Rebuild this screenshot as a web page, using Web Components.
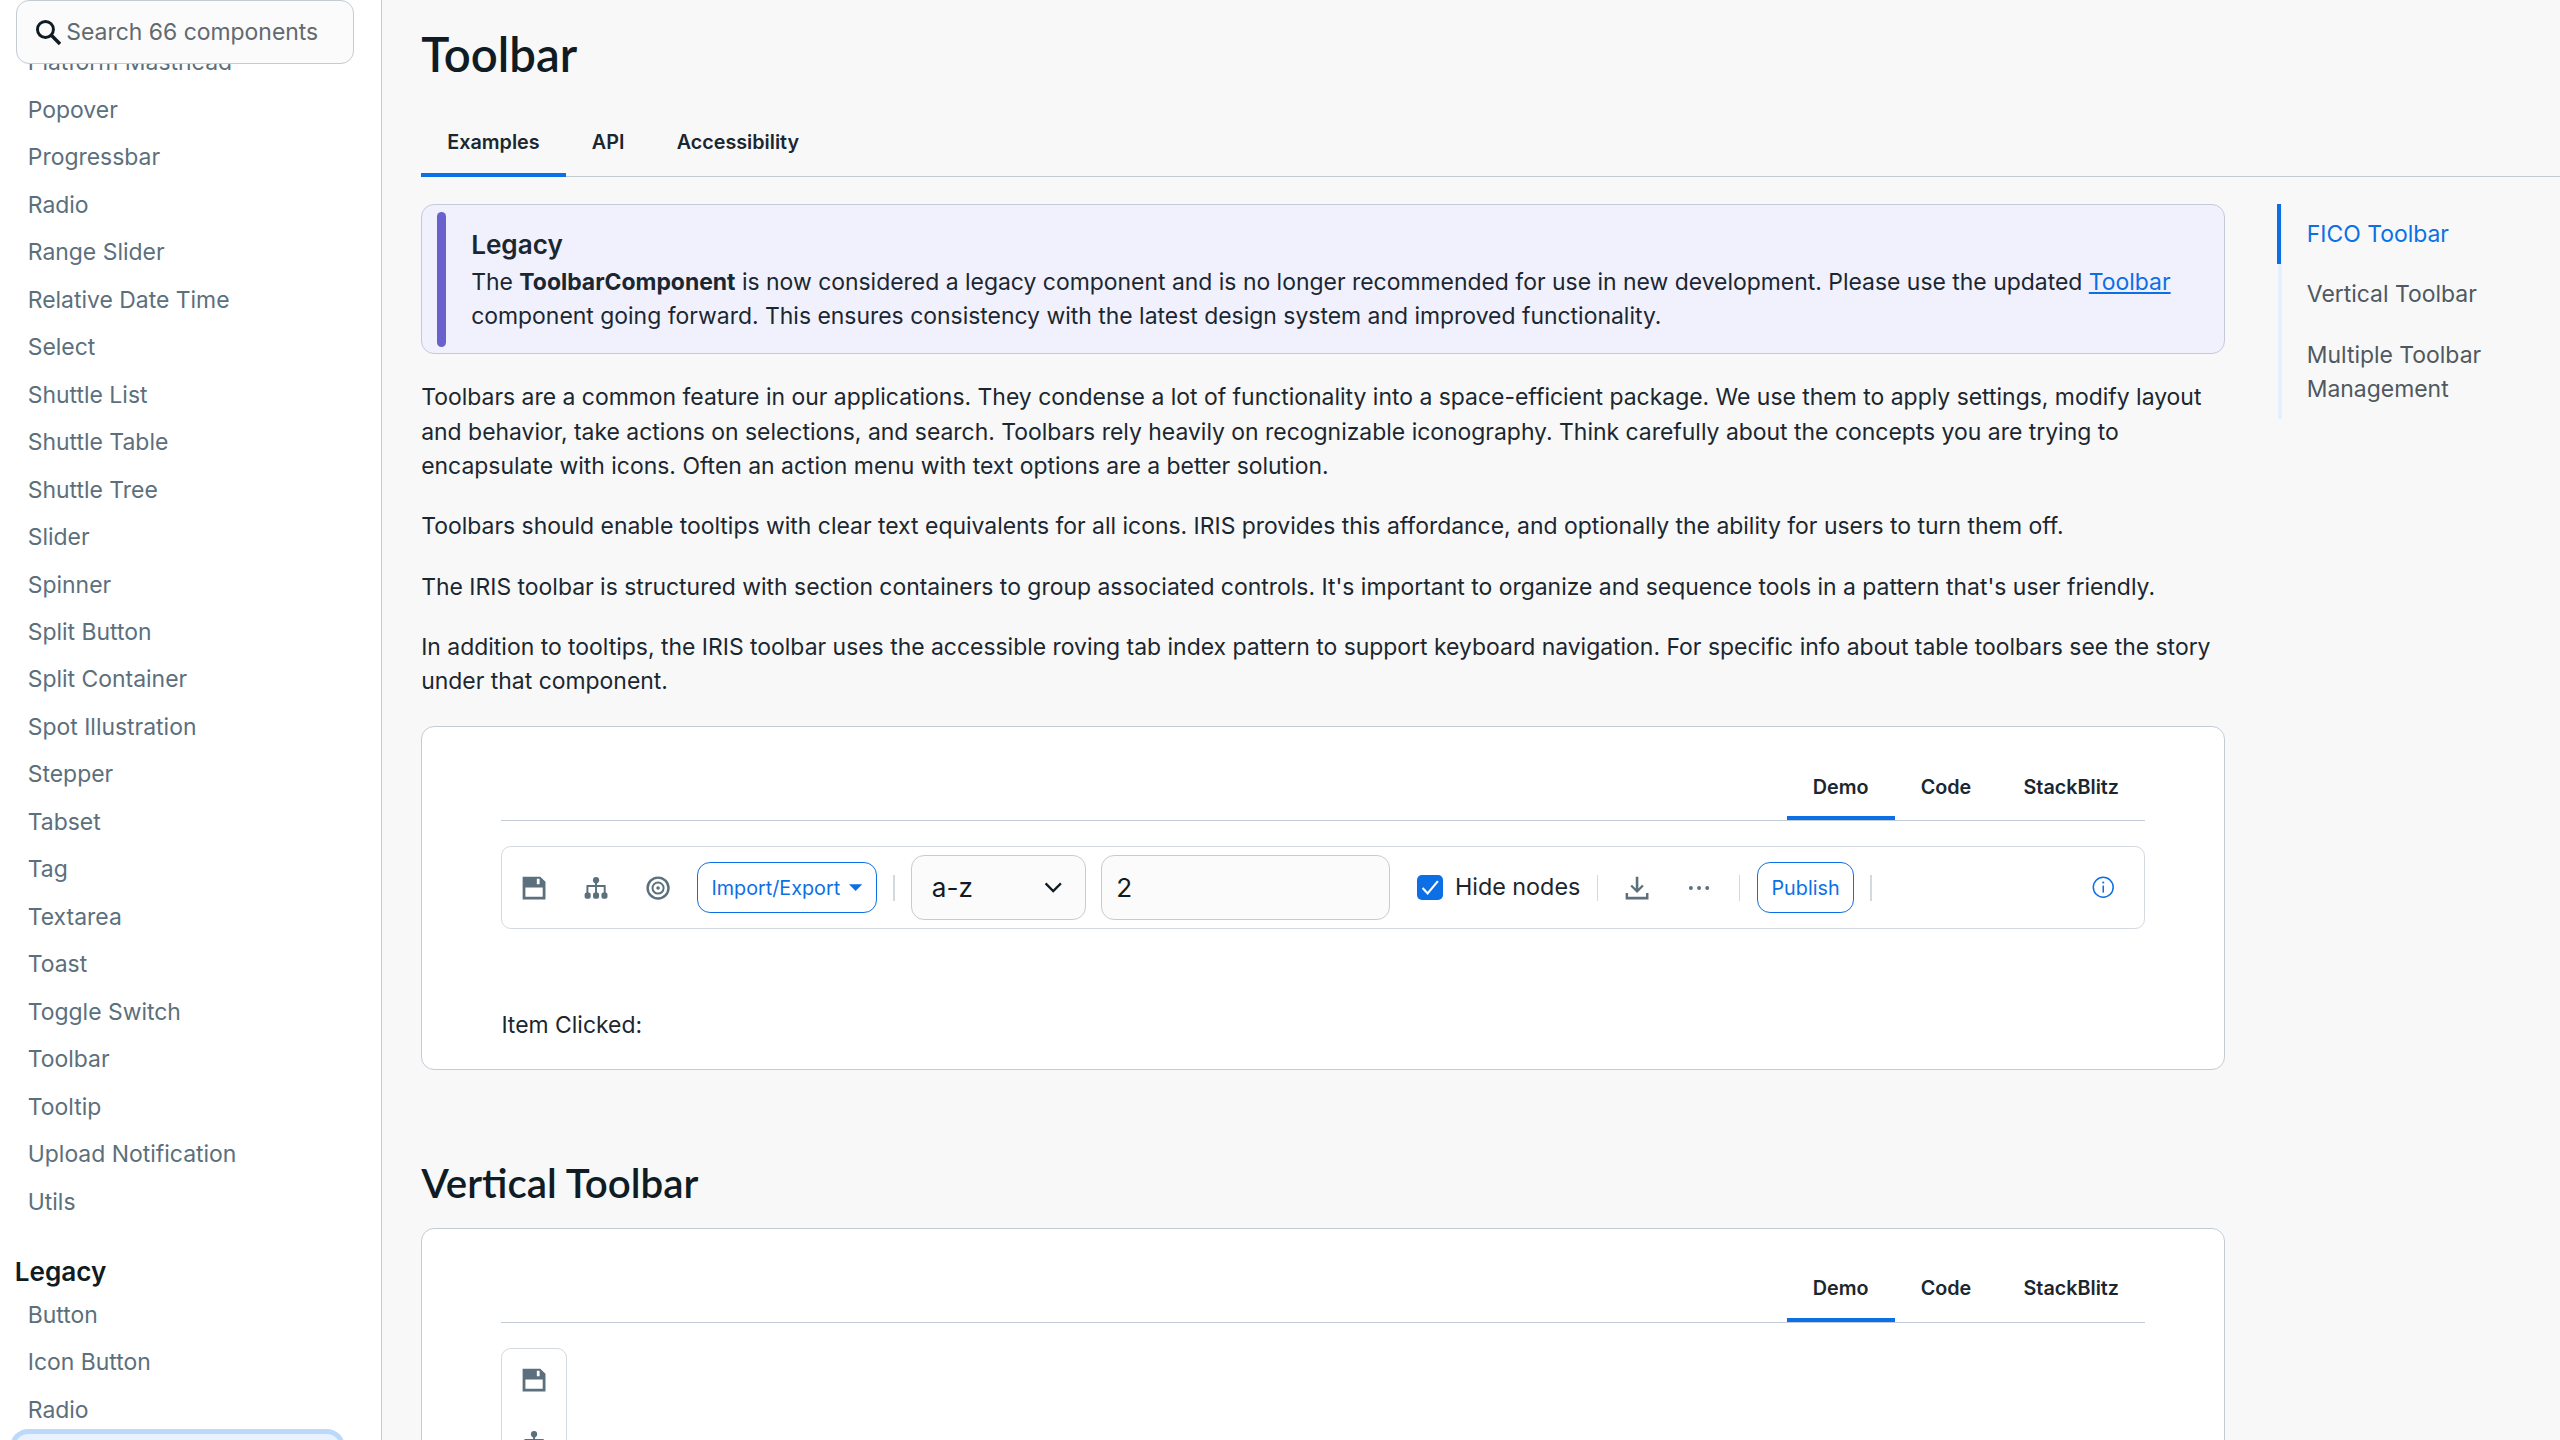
<!DOCTYPE html>
<html lang="en">
<head>
<meta charset="utf-8">
<title>Toolbar</title>
<style>
  /* the whole page is measured on a 1568 wide grid, the window is 2560 */
  html { zoom: 1.63265; overflow: hidden; }
  body { margin: 0; width: 1568px; height: 882px; overflow: hidden; font-family: Inter, "Liberation Sans", sans-serif; }
</style>
</head>
<body>
<app-shell>
  <side-nav slot="side"></side-nav>
  <doc-page slot="main" heading="Toolbar">
    <page-tabs items="Examples,API,Accessibility"></page-tabs>
    <legacy-alert>
      The <b>ToolbarComponent</b> is now considered a legacy component and is no longer recommended for use in new development. Please use the updated <a href="#">Toolbar</a> component going forward. This ensures consistency with the latest design system and improved functionality.
    </legacy-alert>
    <p>Toolbars are a common feature in our applications. They condense a lot of functionality into a space-efficient package. We use them to apply settings, modify layout and behavior, take actions on selections, and search. Toolbars rely heavily on recognizable iconography. Think carefully about the concepts you are trying to encapsulate with icons. Often an action menu with text options are a better solution.</p>
    <p>Toolbars should enable tooltips with clear text equivalents for all icons. IRIS provides this affordance, and optionally the ability for users to turn them off.</p>
    <p>The IRIS toolbar is structured with section containers to group associated controls. It's important to organize and sequence tools in a pattern that's user friendly.</p>
    <p>In addition to tooltips, the IRIS toolbar uses the accessible roving tab index pattern to support keyboard navigation. For specific info about table toolbars see the story under that component.</p>
    <demo-card>
      <horizontal-toolbar></horizontal-toolbar>
      <div style="margin-top:48.5px;font-size:14.05px;line-height:21px;color:#1b2730">Item Clicked:</div>
    </demo-card>
    <section-title>Vertical Toolbar</section-title>
    <demo-card>
      <vertical-toolbar></vertical-toolbar>
    </demo-card>
    <toc-nav slot="toc"></toc-nav>
  </doc-page>
</app-shell>

<script>
const ICONS = {
  save: '<path fill-rule="evenodd" d="M1 1h10.8L15 4.2V15H1zM2.7 7.6v5.7h10.6V7.6zM9.7 2.3v3.4h1.7V2.3z"/>',
  tree: '<circle cx="8" cy="3.2" r="1.9"/><path d="M7.4 4h1.2v2.2h5.3v4.8h-1.2V7.4H8.6V11H7.4V7.4H3.300V11H2.100V6.200h5.300z"/><rect x="1" y="10.700" width="3.700" height="3.800" rx="1.200"/><rect x="6.150" y="10.700" width="3.700" height="3.800" rx="1.200"/><rect x="11.300" y="10.700" width="3.700" height="3.800" rx="1.200"/>',
  target: '<circle cx="8" cy="8" r="6.4" fill="none" stroke="currentColor" stroke-width="1.5"/><circle cx="8" cy="8" r="3.4" fill="none" stroke="currentColor" stroke-width="1.2"/><circle cx="8" cy="8" r="1.1"/>',
  download: '<path d="M7.2 1h1.6v7.2l2.3-2.3 1 1L8 11 3.9 6.9l1-1 2.3 2.3z"/><path d="M1 11h1.5v2.3h11V11H15v4H1z"/>',
  dots: '<circle cx="3" cy="8" r="1.2"/><circle cx="8" cy="8" r="1.2"/><circle cx="13" cy="8" r="1.2"/>',
  info: '<circle cx="8" cy="8" r="6.5" fill="none" stroke="currentColor" stroke-width="1"/><rect x="7.5" y="6.9" width="1" height="4.6"/><circle cx="8" cy="4.9" r=".7"/>',
  search: '<circle cx="6.6" cy="6.6" r="4.6" fill="none" stroke="currentColor" stroke-width="1.7"/><path d="M10 10l5 5" fill="none" stroke="currentColor" stroke-width="2"/>',
  chevron: '<path d="M3 5.5l5 5 5-5" fill="none" stroke="currentColor" stroke-width="1.5"/>',
  caret: '<path d="M3 5.5h10L8 10.5z"/>'
};

class ToolIcon extends HTMLElement {
  constructor() {
    super();
    const size = this.getAttribute('size') || 16;
    this.attachShadow({ mode: 'open' }).innerHTML = `
      <style>
        :host { display: inline-flex; align-items: center; justify-content: center; }
        svg { display: block; fill: currentColor; }
      </style>
      <svg viewBox="0 0 16 16" width="${size}" height="${size}">${ICONS[this.getAttribute('name')]}</svg>`;
  }
}
customElements.define('tool-icon', ToolIcon);

class AppShell extends HTMLElement {
  constructor() {
    super();
    this.attachShadow({ mode: 'open' }).innerHTML = `
      <style>
        :host { display: grid; grid-template-columns: 234px 1fr; height: 882px; overflow: hidden; }
      </style>
      <slot name="side"></slot>
      <slot name="main"></slot>`;
  }
}
customElements.define('app-shell', AppShell);

const COMPONENTS = ['Platform Masthead', 'Popover', 'Progressbar', 'Radio', 'Range Slider', 'Relative Date Time', 'Select',
  'Shuttle List', 'Shuttle Table', 'Shuttle Tree', 'Slider', 'Spinner', 'Split Button', 'Split Container', 'Spot Illustration',
  'Stepper', 'Tabset', 'Tag', 'Textarea', 'Toast', 'Toggle Switch', 'Toolbar', 'Tooltip', 'Upload Notification', 'Utils'];
const LEGACY = ['Button', 'Icon Button', 'Radio'];

class SideNav extends HTMLElement {
  constructor() {
    super();
    const row = name => `<a href="#">${name}</a>`;
    this.attachShadow({ mode: 'open' }).innerHTML = `
      <style>
        :host { display: block; position: relative; height: 882px; overflow: hidden; background: #fff; border-right: 1px solid #c3ccd4; }
        .search { position: absolute; left: 10px; top: 0; width: 207px; height: 39.5px; box-sizing: border-box; display: flex; align-items: center; gap: 3px; padding-left: 10px;
                  background: #fbfbfb; border: 1px solid #c3ccd4; border-radius: 8px; font-size: 14.05px; color: #62696f; }
        .search tool-icon { color: #101c24; }
        .list { padding-top: 24px; }
        a { display: block; height: 29.09px; line-height: 29px; padding-left: 17px; font-size: 14.05px; color: #5c6f7c; text-decoration: none; }
        h4 { margin: 16px 0 0 9px; font-size: 16px; line-height: 24px; font-weight: 600; color: #101c24; }
        .current { height: 29px; margin: 0 25px 0 9px; border-radius: 8px; background: #e9f2fe; box-shadow: 0 0 0 3px #bcd8fb; }
      </style>
      <div class="list">
        ${COMPONENTS.map(row).join('')}
        <h4>Legacy</h4>
        ${LEGACY.map(row).join('')}
        <div class="current"></div>
      </div>
      <div class="search"><tool-icon name="search" size="17"></tool-icon><span>Search 66 components</span></div>`;
  }
}
customElements.define('side-nav', SideNav);

class DocPage extends HTMLElement {
  constructor() {
    super();
    this.attachShadow({ mode: 'open' }).innerHTML = `
      <style>
        :host { display: block; height: 882px; overflow: hidden; background: #f8f8f8; padding-left: 24px; color: #1b2730; }
        h1 { margin: 0; padding-top: 16px; height: 66px; box-sizing: border-box; font: 600 29px/34px Lato, Inter, sans-serif; color: #101c24; }
        .body { display: grid; grid-template-columns: 1105px 1fr; column-gap: 32px; margin-top: 16.5px; }
        ::slotted(p) { margin: 0 0 16px; font-size: 14.05px; line-height: 21px; }
      </style>
      <h1>${this.getAttribute('heading')}</h1>
      <slot name="tabs"></slot>
      <div class="body">
        <div><slot></slot></div>
        <slot name="toc"></slot>
      </div>`;
    this.querySelector('page-tabs').slot = 'tabs';
  }
}
customElements.define('doc-page', DocPage);

class PageTabs extends HTMLElement {
  constructor() {
    super();
    const tabs = this.getAttribute('items').split(',');
    this.attachShadow({ mode: 'open' }).innerHTML = `
      <style>
        :host { display: flex; height: 42.5px; box-sizing: border-box; border-bottom: 1px solid #c3ccd4; font-size: 12.1px; font-weight: 600; color: #1b2730; }
        span { padding: 0 16px; height: 42.5px; box-sizing: border-box; line-height: 42px; }
        .active { border-bottom: 2.5px solid #0d6fe6; }
      </style>
      ${tabs.map((t, i) => `<span class="${i ? '' : 'active'}">${t}</span>`).join('')}`;
  }
}
customElements.define('page-tabs', PageTabs);

class LegacyAlert extends HTMLElement {
  constructor() {
    super();
    this.attachShadow({ mode: 'open' }).innerHTML = `
      <style>
        :host { display: flex; gap: 15.5px; box-sizing: border-box; height: 92px; margin-bottom: 16px; padding: 4px 8px 4px 9px;
                background: #f1f1fd; border: 1px solid #c4cad6; border-radius: 8px; }
        .bar { flex: none; width: 5.5px; border-radius: 3px; background: #6a61cc; }
        .text { padding-top: 8px; font-size: 14.05px; line-height: 21px; color: #1b2730; }
        .title { font-size: 16px; line-height: 24px; font-weight: 600; margin-bottom: .5px; }
        ::slotted(a) { color: #0d6fe6; }
        ::slotted(b) { font-weight: 700; }
      </style>
      <div class="bar"></div>
      <div class="text"><div class="title">Legacy</div><slot></slot></div>`;
  }
}
customElements.define('legacy-alert', LegacyAlert);

class DemoCard extends HTMLElement {
  constructor() {
    super();
    this.attachShadow({ mode: 'open' }).innerHTML = `
      <style>
        :host { display: block; box-sizing: border-box; background: #fff; border: 1px solid #c3ccd4; border-radius: 8px; padding: 0 48.5px 16px; margin-top: 17px; }
        .tabs { display: flex; justify-content: flex-end; height: 41px; margin: 16px 0 15px; border-bottom: 1px solid #c3ccd4; font-size: 12.1px; font-weight: 600; color: #1b2730; }
        span { padding: 0 16px; height: 41px; box-sizing: border-box; line-height: 41px; }
        .active { border-bottom: 2.5px solid #0d6fe6; }
      </style>
      <div class="tabs"><span class="active">Demo</span><span>Code</span><span>StackBlitz</span></div>
      <slot></slot>`;
  }
}
customElements.define('demo-card', DemoCard);

class SectionTitle extends HTMLElement {
  constructor() {
    super();
    this.attachShadow({ mode: 'open' }).innerHTML = `
      <style>
        :host { display: block; margin: 52px 0 -6px; font: 600 24.7px/34px Lato, Inter, sans-serif; color: #101c24; }
      </style>
      <slot></slot>`;
  }
}
customElements.define('section-title', SectionTitle);

const TOOLBAR_STYLE = `
  .tool { flex: none; width: 38px; height: 38px; display: flex; align-items: center; justify-content: center; color: #5c6f7c; }
  .sep { flex: none; width: 1px; height: 16px; background: #d3d9de; }
  .btn { flex: none; box-sizing: border-box; height: 31px; display: flex; align-items: center; gap: 3px; padding: 0 8px; border: 1px solid #0d6fe6; border-radius: 8px;
         font-size: 12.1px; color: #0d6fe6; background: #fff; }
  .field { flex: none; box-sizing: border-box; height: 39.5px; display: flex; align-items: center; justify-content: space-between; background: #fbfbfb;
           border: 1px solid #c3ccd4; border-radius: 8px; font-size: 16px; color: #101c24; }
  .check { flex: none; width: 15.5px; height: 15.5px; border-radius: 3px; background: #0d6fe6; display: flex; align-items: center; justify-content: center; }
`;

class HorizontalToolbar extends HTMLElement {
  constructor() {
    super();
    this.attachShadow({ mode: 'open' }).innerHTML = `
      <style>
        :host { display: flex; align-items: center; box-sizing: border-box; height: 51px; padding-left: .5px; background: #fff; border: 1px solid #d3d9de; border-radius: 6px; }
        ${TOOLBAR_STYLE}
        .label { font-size: 14.3px; color: #1b2730; margin: -1px 0 0 7.5px; white-space: nowrap; }
      </style>
      <div class="tool"><tool-icon name="save"></tool-icon></div>
      <div class="tool"><tool-icon name="tree"></tool-icon></div>
      <div class="tool"><tool-icon name="target"></tool-icon></div>
      <div class="btn" style="margin-left:5px;width:110px">Import/Export<tool-icon name="caret" size="13"></tool-icon></div>
      <div class="sep" style="margin-left:10px"></div>
      <div class="field" style="margin-left:10px;width:107px;padding:0 12px"><span>a-z</span><tool-icon name="chevron" size="15"></tool-icon></div>
      <div class="field" style="margin-left:9px;width:177px;padding:0 9px"><span>2</span></div>
      <div class="check" style="margin-left:17px"><svg viewBox="0 0 16 16" width="15" height="15"><path d="M3 8.5l3.300 3.5L13 4" fill="none" stroke="#fff" stroke-width="1.4"/></svg></div>
      <div class="label">Hide nodes</div>
      <div class="sep" style="margin-left:10px"></div>
      <div class="tool" style="margin-left:5px"><tool-icon name="download"></tool-icon></div>
      <div class="tool"><tool-icon name="dots"></tool-icon></div>
      <div class="sep" style="margin-left:5px"></div>
      <div class="btn" style="margin-left:10.5px;width:59px;justify-content:center">Publish</div>
      <div class="sep" style="margin-left:10px"></div>
      <div class="tool" style="margin-left:auto;margin-right:6px;color:#0d6fe6"><tool-icon name="info" size="15"></tool-icon></div>`;
  }
}
customElements.define('horizontal-toolbar', HorizontalToolbar);

class VerticalToolbar extends HTMLElement {
  constructor() {
    super();
    this.attachShadow({ mode: 'open' }).innerHTML = `
      <style>
        :host { display: flex; flex-direction: column; align-items: center; width: 40.5px; box-sizing: border-box; margin-top: 1.5px; background: #fff; border: 1px solid #d3d9de; border-radius: 6px; }
        ${TOOLBAR_STYLE}
      </style>
      <div class="tool"><tool-icon name="save"></tool-icon></div>
      <div class="tool"><tool-icon name="tree"></tool-icon></div>
      <div class="tool"><tool-icon name="target"></tool-icon></div>`;
  }
}
customElements.define('vertical-toolbar', VerticalToolbar);

class TocNav extends HTMLElement {
  constructor() {
    super();
    this.attachShadow({ mode: 'open' }).innerHTML = `
      <style>
        :host { display: block; align-self: start; box-sizing: border-box; border-left: 2.5px solid #e6f0fc; font-size: 14.05px; line-height: 21px; color: #4f5961; width: 160px; }
        div { padding: 8px 16px 8px 15.5px; margin-left: -2.5px; border-left: 2.5px solid transparent; }
        .active { color: #0d6fe6; border-left-color: #0d6fe6; }
      </style>
      <div class="active">FICO Toolbar</div>
      <div>Vertical Toolbar</div>
      <div>Multiple Toolbar Management</div>`;
  }
}
customElements.define('toc-nav', TocNav);
</script>
</body>
</html>
